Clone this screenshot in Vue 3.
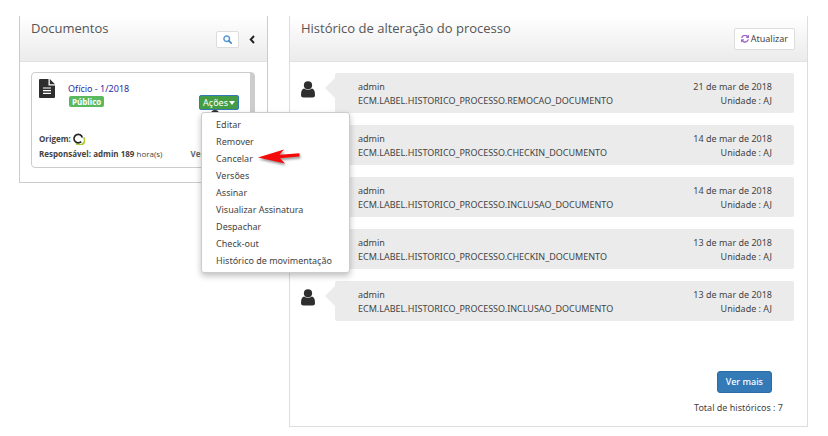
<script setup>
import { ref } from 'vue'

const menuOpen = ref(true)

const actions = [
  'Editar',
  'Remover',
  'Cancelar',
  'Versões',
  'Assinar',
  'Visualizar Assinatura',
  'Despachar',
  'Check-out',
  'Histórico de movimentação',
]

const history = [
  { user: 'admin', event: 'ECM.LABEL.HISTORICO_PROCESSO.REMOCAO_DOCUMENTO', date: '21 de mar de 2018', unit: 'AJ' },
  { user: 'admin', event: 'ECM.LABEL.HISTORICO_PROCESSO.CHECKIN_DOCUMENTO', date: '14 de mar de 2018', unit: 'AJ' },
  { user: 'admin', event: 'ECM.LABEL.HISTORICO_PROCESSO.INCLUSAO_DOCUMENTO', date: '14 de mar de 2018', unit: 'AJ' },
  { user: 'admin', event: 'ECM.LABEL.HISTORICO_PROCESSO.CHECKIN_DOCUMENTO', date: '13 de mar de 2018', unit: 'AJ' },
  { user: 'admin', event: 'ECM.LABEL.HISTORICO_PROCESSO.INCLUSAO_DOCUMENTO', date: '13 de mar de 2018', unit: 'AJ' },
]
</script>

<template>
  <main class="page">
    <section class="panel documents">
      <header class="panel-head">
        <h2>Documentos</h2>
        <div class="tools">
          <button class="btn search" type="button" aria-label="Pesquisar">
            <svg viewBox="0 0 16 16" width="9" height="9" aria-hidden="true">
              <circle cx="6.6" cy="6.6" r="5" fill="none" stroke="#5a9bd5" stroke-width="2.6" />
              <path d="M10.4 10.4L14.6 14.6" stroke="#428bca" stroke-width="3" stroke-linecap="round" />
            </svg>
          </button>
          <button class="collapse" type="button" aria-label="Recolher">
            <svg viewBox="0 0 6 9" width="6" height="9" aria-hidden="true">
              <path d="M5 1L1.700 4.500L5 8" fill="none" stroke="#222" stroke-width="1.900" />
            </svg>
          </button>
        </div>
      </header>
      <div class="documents-body">
        <article class="card">
          <div class="card-top">
            <svg class="file" viewBox="0 0 16 19" width="16" height="19" aria-hidden="true">
              <path d="M1 0H9.500V6.500H16V18Q16 19 15 19H1Q0 19 0 18V1Q0 0 1 0Z" fill="#2e2e2e" />
              <path d="M10.800 0L16 5.200H10.800Z" fill="#2e2e2e" />
              <path d="M4 9H12M4 11.700H12M4 14.400H12" stroke="#fff" stroke-width="1.200" />
            </svg>
            <div class="doc">
              <a href="#">Ofício - 1/2018</a>
              <span class="badge">Público</span>
            </div>
            <div class="dropdown">
              <button class="actions" type="button" :aria-expanded="menuOpen" @click="menuOpen = !menuOpen">
                Ações
                <svg viewBox="0 0 6 4" width="6" height="4" aria-hidden="true"><path d="M0 0H6L3 4Z" fill="#fff" /></svg>
              </button>
              <svg class="avatar" viewBox="0 0 8 8" width="8" height="8" aria-hidden="true">
                <circle cx="4" cy="4" r="4" fill="#2e2e2e" />
              </svg>
              <ul v-if="menuOpen" class="menu">
                <li v-for="action in actions" :key="action"><a href="#">{{ action }}</a></li>
              </ul>
              <svg v-if="menuOpen" class="pointer" viewBox="0 0 43 16" width="43" height="16" aria-hidden="true">
                <path d="M0 8.500L26 0.500L21.500 5.800L41.500 4.200V7.400L22 9.200L27 14.500Z" fill="#f50a0a" />
              </svg>
            </div>
          </div>
          <div class="meta">
            <p><b>Origem:</b>
              <svg viewBox="0 0 12 12" width="12" height="12" aria-hidden="true">
                <path d="M10.900 4.500A4.800 4.800 0 0 1 3.200 10.200" fill="none" stroke="#a9c936" stroke-width="2" />
                <path d="M8.200 8.600A4.200 4.200 0 1 1 9.300 4.600" fill="none" stroke="#222" stroke-width="1.600" />
              </svg>
            </p>
            <p class="owner"><span><b>Responsável: admin 189</b> hora(s)</span><b class="version">Ver</b></p>
          </div>
        </article>
      </div>
    </section>

    <section class="panel history">
      <header class="panel-head">
        <h2>Histórico de alteração do processo</h2>
        <button class="btn refresh" type="button">
          <svg viewBox="0 128 1536 1408" width="8" height="8" aria-hidden="true">
            <path fill="#a064c8" d="M1511 928q0 5-1 7-64 268-268 434.500t-478 166.500q-146 0-282.500-55t-243.500-157l-129 129q-19 19-45 19t-45-19-19-45v-448q0-26 19-45t45-19h448q26 0 45 19t19 45-19 45l-137 137q71 66 161 102t187 36q134 0 250-65t186-179q11-17 53-117 8-23 30-23h192q13 0 22.500 9.500t9.500 22.500zm25-800v448q0 26-19 45t-45 19h-448q-26 0-45-19t-19-45 19-45l138-138q-148-137-349-137-134 0-250 65t-186 179q-11 17-53 117-8 23-30 23h-199q-13 0-22.500-9.500t-9.500-22.500v-7q65-268 270-434.500t480-166.500q146 0 284 55.500t245 156.500l130-129q19-19 45-19t45 19 19 45z" />
          </svg>
          Atualizar
        </button>
      </header>
      <ol class="entries">
        <li v-for="(entry, i) in history" :key="i" class="entry">
          <svg class="user" viewBox="0 0 14 17" width="14" height="17" aria-hidden="true">
            <circle cx="7" cy="4.300" r="4.100" fill="#2e2e2e" />
            <path d="M3 7.600Q7 10.400 11 7.600Q14 8.300 14 14Q14 16.500 11.500 16.500H2.500Q0 16.500 0 14Q0 8.300 3 7.600Z" fill="#2e2e2e" />
          </svg>
          <div class="bubble">
            <p>{{ entry.user }}<br>{{ entry.event }}</p>
            <p class="when">{{ entry.date }}<br>Unidade : {{ entry.unit }}</p>
          </div>
        </li>
      </ol>
      <footer class="more">
        <button class="primary" type="button">Ver mais</button>
        <p>Total de históricos : 7</p>
      </footer>
    </section>
  </main>
</template>

<style>
body {
  margin: 0;
  background: #fff;
}
</style>

<style scoped>
* {
  box-sizing: border-box;
}
.page {
  display: grid;
  grid-template-columns: 249fr 519fr;
  gap: 21px;
  align-items: start;
  padding: 16px 20px 8px 19px;
  font: 9px/14px "Noto Sans", "Open Sans", sans-serif;
  color: #444;
}
h2,
p,
ul,
ol {
  margin: 0;
  padding: 0;
  font-weight: 400;
  list-style: none;
}
button {
  font: inherit;
  color: inherit;
  cursor: pointer;
}
.panel {
  border: 1px solid #ccc;
  border-top: 0;
}
.history {
  border-color: #ddd;
}
.panel-head {
  display: flex;
  justify-content: space-between;
  align-items: flex-start;
  height: 46px;
  padding: 0 12px 0 11px;
  border-bottom: 1px solid #e2e2e2;
  background: linear-gradient(#fff, #ebebeb);
}
h2 {
  padding-top: 2px;
  font-family: "Open Sans", sans-serif;
  font-size: 13px;
  line-height: 20px;
  color: #555;
}
.tools {
  display: flex;
  align-items: center;
  gap: 10px;
  padding-top: 15px;
}
.btn {
  display: flex;
  align-items: center;
  justify-content: center;
  gap: 2px;
  border: 1px solid #ddd;
  border-radius: 2px;
  background: #fff;
}
.search {
  width: 23px;
  height: 17px;
  padding: 0;
}
.collapse {
  display: flex;
  padding: 0;
  border: 0;
  background: none;
}
.refresh {
  height: 22px;
  margin-top: 12px;
  padding: 0 6px;
}
.documents-body {
  padding: 10px 12px 14px 11px;
}
.card {
  height: 96px;
  padding: 6px 11px 0 7px;
  border: 1px solid #ccc;
  border-radius: 4px;
  background: linear-gradient(#ccc, #ccc) right top / 4px 44px no-repeat;
}
.card-top {
  display: flex;
  height: 52px;
}
.doc {
  display: flex;
  flex: 1;
  flex-direction: column;
  align-items: flex-start;
  padding: 3px 0 0 13px;
}
.doc a {
  color: #2a2aa0;
  text-decoration: none;
}
.badge {
  margin-left: 1px;
  padding: 0 3px;
  border-radius: 2px;
  background: #5cb85c;
  color: #fff;
  font-family: "Open Sans", sans-serif;
  font-size: 8px;
  font-weight: 700;
  line-height: 11px;
}
.dropdown {
  position: relative;
  padding: 16px 4px 0 0;
}
.actions {
  display: flex;
  align-items: center;
  gap: 1px;
  height: 15px;
  padding: 0 3px;
  border: 1px solid #3379b7;
  border-radius: 2px;
  background: #449d44;
  color: #fff;
}
.avatar {
  position: absolute;
  top: 31px;
  left: 12px;
}
.menu {
  position: absolute;
  z-index: 1;
  top: 33px;
  left: 2px;
  min-width: 149px;
  padding: 3px 14px;
  border: 1px solid #ccc;
  border-radius: 3px;
  background: #fff;
  box-shadow: 0 3px 6px rgba(0, 0, 0, 0.25);
  white-space: nowrap;
}
.menu a {
  display: block;
  color: #444;
  line-height: 17px;
  text-decoration: none;
}
.pointer {
  position: absolute;
  z-index: 2;
  top: 70px;
  left: 59px;
  overflow: visible;
  filter: drop-shadow(1px 2px 1px rgba(0, 0, 0, 0.4));
}
.meta {
  font-family: "Open Sans", sans-serif;
  font-size: 8px;
}
.meta p {
  display: flex;
  align-items: center;
  gap: 2px;
  line-height: 15px;
  white-space: nowrap;
}
.version {
  margin-left: 26px;
  color: #666;
}
.entries {
  display: flex;
  flex-direction: column;
  gap: 12px;
  padding: 11px 13px 0 11px;
}
.entry {
  display: flex;
  gap: 20px;
}
.user {
  margin-top: 8px;
}
.bubble {
  position: relative;
  display: flex;
  flex: 1;
  justify-content: space-between;
  padding: 7px 22px 5px 23px;
  border-radius: 2px;
  background: #ebebeb;
}
.bubble::before {
  content: "";
  position: absolute;
  top: 5px;
  right: 100%;
  border: 10px solid transparent;
  border-left: 0;
  border-right-color: #ebebeb;
}
.when {
  text-align: right;
}
.more {
  display: flex;
  flex-direction: column;
  align-items: flex-end;
  gap: 8px;
  padding: 50px 24px 11px;
}
.primary {
  height: 22px;
  margin-right: 11px;
  padding: 0 8px;
  border: 1px solid #2e6da4;
  border-radius: 3px;
  background: #337ab7;
  color: #fff;
  font-weight: 500;
}
</style>
